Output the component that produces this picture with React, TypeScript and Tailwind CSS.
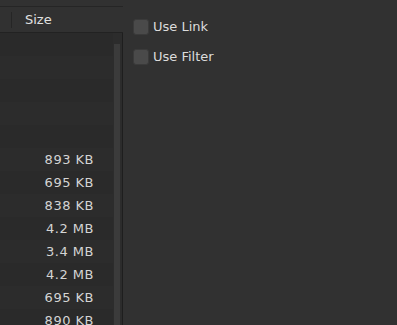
import React from 'react';

const sizes = ['', '', '', '', '', '893 KB', '695 KB', '838 KB', '4.2 MB', '3.4 MB', '4.2 MB', '695 KB', '890 KB'];

export default function App() {
  return (
    <div className="w-[397px] h-[325px] overflow-hidden bg-[#313131] flex text-[13px] text-[#d4d4d4]" style={{ fontFamily: '"DejaVu Sans", sans-serif' }}>
      {/* file table */}
      <div className="w-[123px] flex flex-col shrink-0">
        <div className="h-[7px] border-b border-[#252525]" />
        <div className="h-[26px] flex items-center border-b border-[#222]">
          <div className="w-[12px] h-[16px] border-r border-[#252525]" />
          <span className="pl-[13px] text-[#e0e0e0]">Size</span>
        </div>
        <div className="flex-1 flex border-r border-[#1e1e1e] overflow-hidden">
          <div className="flex-1 flex flex-col tracking-[0.5px]">
            {sizes.map((s, i) => (
              <div key={i} className={`h-[23px] shrink-0 flex items-center justify-end pr-[19px] ${i % 2 ? 'bg-[#2c2c2c]' : 'bg-[#2a2a2a]'}`}>
                {s}
              </div>
            ))}
          </div>
          {/* scrollbar */}
          <div className="w-[9px] bg-[#2c2c2c] pt-[11px] px-[1px]">
            <div className="w-[6px] h-full bg-[#3b3b3b]" />
          </div>
        </div>
      </div>
      {/* options */}
      <div className="flex flex-col gap-[14px] pt-[19px] pl-[10px]">
        <label className="flex items-center gap-[4px] h-[16px]">
          <span className="w-[16px] h-[16px] rounded-[3px] bg-[#4a4a4a] border border-[#3a3a3a]" />
          <span className="text-[#dcdcdc]">Use Link</span>
        </label>
        <label className="flex items-center gap-[4px] h-[16px]">
          <span className="w-[16px] h-[16px] rounded-[3px] bg-[#4a4a4a] border border-[#3a3a3a]" />
          <span className="text-[#dcdcdc]">Use Filter</span>
        </label>
      </div>
    </div>
  );
}
